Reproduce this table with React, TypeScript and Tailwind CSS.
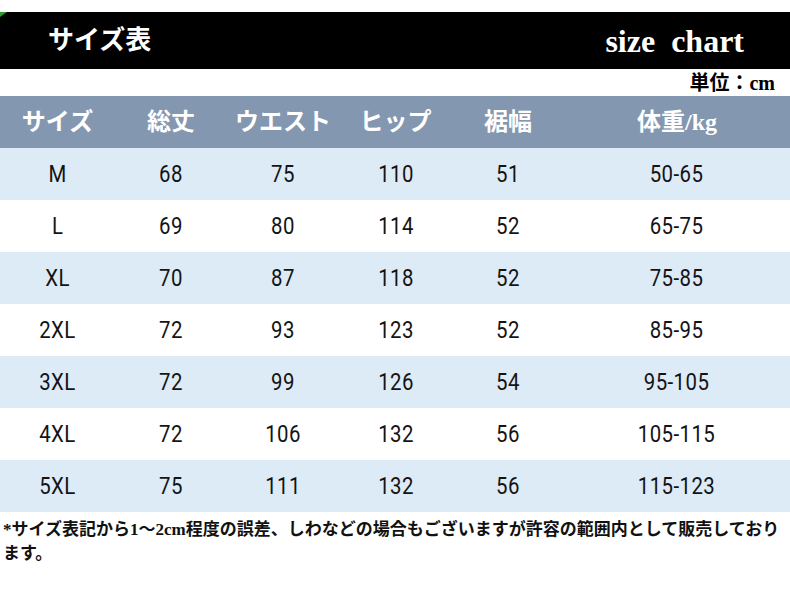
const headers = ["サイズ", "総丈", "ウエスト", "ヒップ", "裾幅", "体重/kg"];

const rows = [
  ["M", "68", "75", "110", "51", "50-65"],
  ["L", "69", "80", "114", "52", "65-75"],
  ["XL", "70", "87", "118", "52", "75-85"],
  ["2XL", "72", "93", "123", "52", "85-95"],
  ["3XL", "72", "99", "126", "54", "95-105"],
  ["4XL", "72", "106", "132", "56", "105-115"],
  ["5XL", "75", "111", "132", "56", "115-123"],
];

const serif = { fontFamily: '"Liberation Serif", "Noto Sans CJK JP", serif' };

const App = () => {
  return (
    <div className="w-[790px] h-[590px] bg-white pt-[12px] overflow-hidden" style={serif}>
      {/* title bar */}
      <div className="relative h-[57px] bg-black flex items-center justify-between pl-[48px] pr-[46px]">
        <svg className="absolute left-0 top-0" width="7" height="5" viewBox="0 0 7 5">
          <polygon points="0,0 7,0 0,5" fill="#2e9a2e" />
        </svg>
        <span className="text-white font-bold text-[26px] leading-none">サイズ表</span>
        <span className="text-white font-bold text-[32px] leading-none whitespace-pre">size  chart</span>
      </div>

      <div className="h-[27px] flex justify-end items-center pr-[15px]">
        <span className="text-black font-bold text-[20px] leading-none">単位：cm</span>
      </div>

      {/* table */}
      <div className="grid grid-cols-[115px_112px_112px_113px_112px_1fr] h-[52px] bg-[#8497b0] items-center">
        {headers.map((h) => (
          <div key={h} className="text-center text-white font-bold text-[24px] leading-none">
            {h}
          </div>
        ))}
      </div>

      {rows.map((r, i) => (
        <div
          key={r[0]}
          className={
            "grid grid-cols-[115px_112px_112px_113px_112px_1fr] h-[52px] items-center " +
            (i % 2 === 0 ? "bg-[#ddebf7]" : "bg-white")
          }
        >
          {r.map((c, j) => (
            <div
              key={j}
              className="text-center text-[#141414] text-[24px] leading-none font-normal"
              style={{ fontFamily: 'Roboto, "Liberation Sans", sans-serif' }}
            >
              <span className="inline-block scale-x-85 tracking-[0.5px]">{c}</span>
            </div>
          ))}
        </div>
      ))}

      <p className="px-[3px] pt-[6px] text-[17px] leading-[24px] font-bold text-[#111] whitespace-nowrap">
        *サイズ表記から1～2cm程度の誤差、しわなどの場合もございますが許容の範囲内として販売しており
        <br />
        ます。
      </p>
    </div>
  );
};

export default App;
